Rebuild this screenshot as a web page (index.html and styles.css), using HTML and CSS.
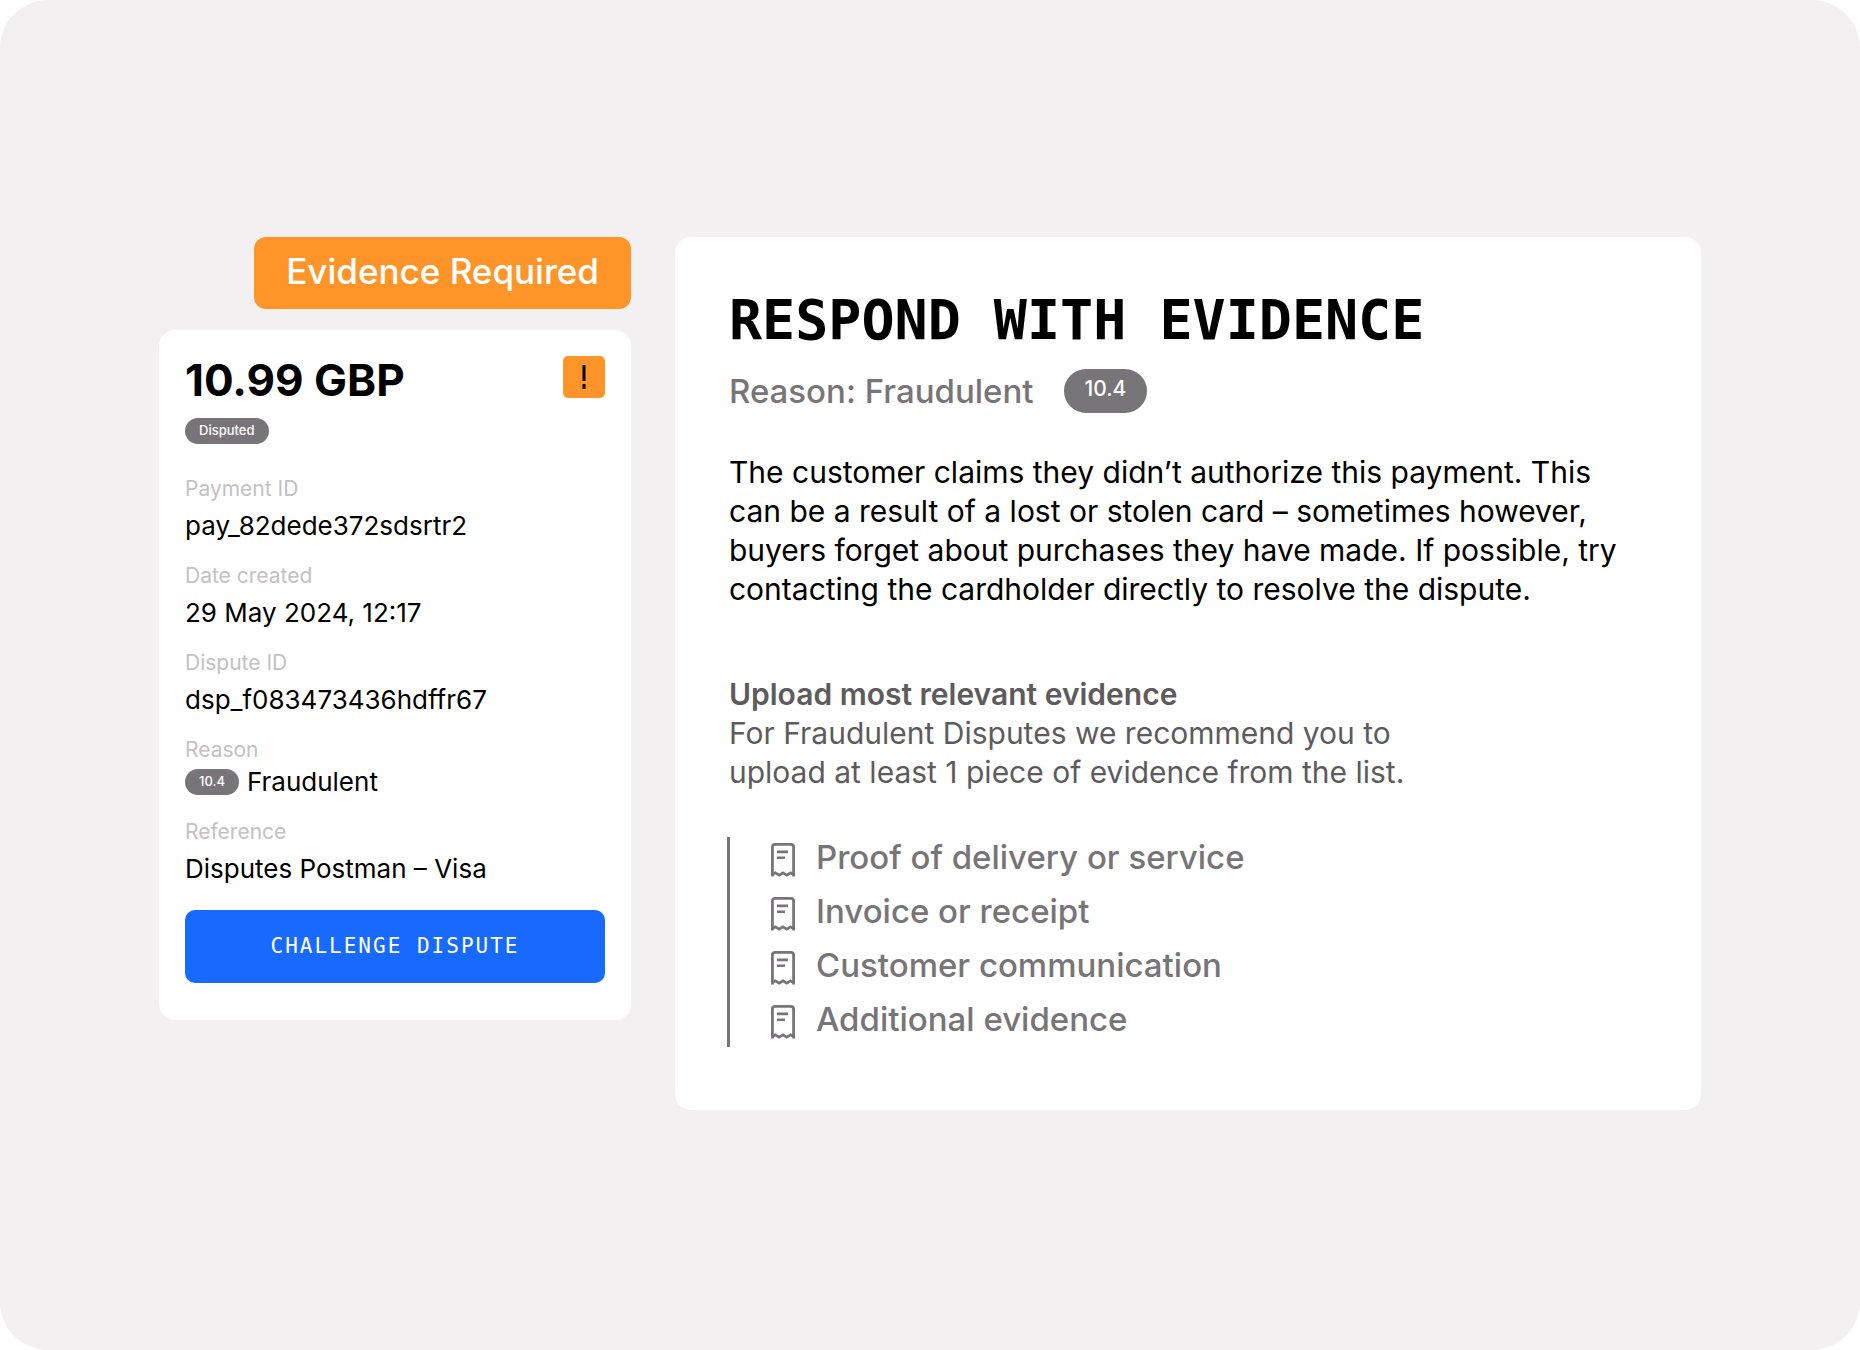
FILE: index.html
```html
<!DOCTYPE html>
<html lang="en">
<head>
  <meta charset="UTF-8">
  <meta name="viewport" content="width=device-width, initial-scale=1.0">
  <title>Dispute details</title>
  <link rel="stylesheet" href="styles.css">
</head>
<body>
  <main class="stage">
    <section class="summary">
      <p class="status-banner">Evidence Required</p>

      <div class="card payment-card">
        <div class="payment-header">
          <h2 class="amount">10.99 GBP</h2>
          <svg class="alert-icon" viewBox="0 0 42 42" role="img" aria-label="Action required">
            <rect width="42" height="42" rx="5" fill="#ff9528"/>
            <path d="M21 9v16M21 28v5" stroke="#000" stroke-width="3"/>
          </svg>
        </div>
        <span class="pill">Disputed</span>

        <dl class="details">
          <div class="detail">
            <dt>Payment ID</dt>
            <dd>pay_82dede372sdsrtr2</dd>
          </div>
          <div class="detail">
            <dt>Date created</dt>
            <dd>29 May 2024, 12:17</dd>
          </div>
          <div class="detail">
            <dt>Dispute ID</dt>
            <dd>dsp_f083473436hdffr67</dd>
          </div>
          <div class="detail detail-reason">
            <dt>Reason</dt>
            <dd><span class="pill">10.4</span>Fraudulent</dd>
          </div>
          <div class="detail">
            <dt>Reference</dt>
            <dd>Disputes Postman – Visa</dd>
          </div>
        </dl>

        <button type="button" class="challenge-button">Challenge dispute</button>
      </div>
    </section>

    <section class="card evidence-card">
      <h1 class="title">Respond with evidence</h1>
      <div class="reason-row">
        <p class="reason">Reason: Fraudulent</p>
        <span class="pill pill-large">10.4</span>
      </div>

      <p class="description">The customer claims they didn’t authorize this payment. This<br>
        can be a result of a lost or stolen card – sometimes however,<br>
        buyers forget about purchases they have made. If possible, try<br>
        contacting the cardholder directly to resolve the dispute.</p>

      <div class="upload">
        <h3 class="upload-title">Upload most relevant evidence</h3>
        <p>For Fraudulent Disputes we recommend you to<br>
          upload at least 1 piece of evidence from the list.</p>
      </div>

      <ul class="evidence-list">
        <li>
          <svg class="receipt-icon" viewBox="0 0 24 34"><use href="#receipt"/></svg>
          Proof of delivery or service
        </li>
        <li>
          <svg class="receipt-icon" viewBox="0 0 24 34"><use href="#receipt"/></svg>
          Invoice or receipt
        </li>
        <li>
          <svg class="receipt-icon" viewBox="0 0 24 34"><use href="#receipt"/></svg>
          Customer communication
        </li>
        <li>
          <svg class="receipt-icon" viewBox="0 0 24 34"><use href="#receipt"/></svg>
          Additional evidence
        </li>
      </ul>
    </section>
  </main>

  <svg class="sprite" aria-hidden="true">
    <symbol id="receipt" viewBox="0 0 24 34">
      <path d="M1.4 33.6V4.2Q1.4 1.4 4.2 1.4H19.8Q22.6 1.4 22.6 4.2V33.6" fill="none" stroke="currentColor" stroke-width="2.8"/>
      <path d="M1.4 31.6L4.3 29.8L8.2 32.2L12 29.8L15.8 32.2L19.7 29.8L22.6 31.6" fill="none" stroke="currentColor" stroke-width="2.6"/>
      <path d="M6 8.9H17M6 14.8H14" fill="none" stroke="currentColor" stroke-width="2.6"/>
    </symbol>
  </svg>
</body>
</html>
```
FILE: styles.css
```css
* {
  box-sizing: border-box;
}

body {
  margin: 0;
  background: #fff;
  color: #000;
  font-family: Inter, "Liberation Sans", sans-serif;
}

h1,
h2,
h3,
p,
dl,
dd,
ul {
  margin: 0;
}

.stage {
  min-height: 100vh;
  padding: 40px 159px 43px;
  display: grid;
  grid-template-columns: 46fr 100fr;
  align-content: center;
  align-items: start;
  gap: 44px;
  background: #f2f0f1;
  border-radius: 48px;
}

.card {
  background: #fff;
  border-radius: 16px;
}

.summary {
  display: flex;
  flex-direction: column;
  gap: 21px;
}

.status-banner {
  align-self: flex-end;
  padding: 14px 32px 18px;
  background: #ff9528;
  border-radius: 12px;
  color: #fff;
  font-size: 35px;
  font-weight: 500;
  line-height: 40px;
}

.payment-card {
  padding: 26px 26px 37px;
  display: flex;
  flex-direction: column;
  align-items: flex-start;
}

.payment-header {
  width: 100%;
  margin-bottom: 14px;
  display: flex;
  justify-content: space-between;
  align-items: flex-start;
}

.amount {
  font-size: 44px;
  font-weight: 700;
  line-height: 48px;
}

.alert-icon {
  width: 42px;
  height: 42px;
}

.pill {
  padding: 0 14px 2px;
  background: #777577;
  border-radius: 22px;
  color: #fff;
  font-size: 13px;
  font-weight: 500;
  line-height: 24px;
}

.pill-large {
  padding: 0 21px 4px;
  font-size: 21px;
  line-height: 40px;
}

.details {
  width: 100%;
  margin: 31px 0 25px;
  display: flex;
  flex-direction: column;
  gap: 20px;
}

.detail {
  display: flex;
  flex-direction: column;
  gap: 7px;
}

.detail-reason {
  gap: 2px;
}

.detail dt {
  color: #c3c1c3;
  font-size: 21px;
  line-height: 28px;
}

.detail dd {
  display: flex;
  align-items: center;
  gap: 8px;
  font-size: 26px;
  line-height: 32px;
}

.challenge-button {
  width: 100%;
  padding: 22px 16px 23px;
  background: #186aff;
  border: none;
  border-radius: 10px;
  color: #fff;
  cursor: pointer;
  font-family: "DejaVu Sans Mono", monospace;
  font-size: 21px;
  letter-spacing: 2px;
  line-height: 28px;
  text-transform: uppercase;
}

.challenge-button:hover {
  background: #0f5ae6;
}

.evidence-card {
  padding: 51px 54px 63px;
}

.title {
  font-family: "DejaVu Sans Mono", monospace;
  font-size: 55px;
  font-weight: 700;
  line-height: 64px;
  text-transform: uppercase;
}

.reason-row {
  margin: 17px 0 40px;
  display: flex;
  align-items: center;
  gap: 30px;
}

.reason {
  color: #777577;
  font-size: 33px;
  font-weight: 500;
  line-height: 44px;
}

.description {
  font-size: 30px;
  line-height: 39px;
}

.upload {
  margin: 66px 0 45px;
  color: #5d5b5d;
  font-size: 30px;
  line-height: 39px;
}

.upload-title {
  font-size: 30px;
  font-weight: 600;
}

.evidence-list {
  margin-left: -2px;
  padding: 0 0 8px 41px;
  display: flex;
  flex-direction: column;
  gap: 14px;
  border-left: 3px solid #777577;
  color: #777577;
  font-size: 33px;
  font-weight: 500;
  line-height: 40px;
  list-style: none;
}

.evidence-list li {
  display: flex;
  align-items: center;
  gap: 21px;
}

.receipt-icon {
  width: 24px;
  height: 34px;
  margin-top: 5px;
  flex: none;
}

.sprite {
  position: absolute;
  width: 0;
  height: 0;
}
```
